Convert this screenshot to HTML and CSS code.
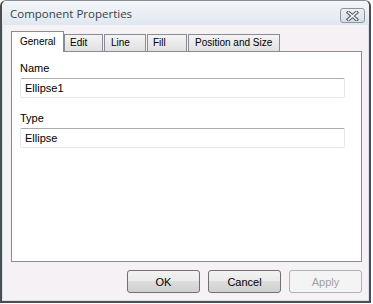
FILE: index.html
```html
<!DOCTYPE html>
<html lang="en">
<head>
  <meta charset="UTF-8">
  <title>Component Properties</title>
  <link rel="stylesheet" href="styles.css">
</head>
<body>

  <!-- Dialog window -->
  <div class="window">
    <div class="titlebar">
      <span class="title">Component Properties</span>
      <button class="close-btn" aria-label="Close">
        <svg width="15" height="10" viewBox="0 0 15 10">
          <path d="M3.5 1.5 L11.5 8.5 M11.5 1.5 L3.5 8.5" stroke="#4a5562" stroke-width="3.6" stroke-linecap="square" fill="none"/>
          <path d="M3.5 1.5 L11.5 8.5 M11.5 1.5 L3.5 8.5" stroke="#f4f6f8" stroke-width="1.6" stroke-linecap="square" fill="none"/>
        </svg>
      </button>
    </div>

    <div class="client">
      <!-- Tabs -->
      <div class="tabs">
        <div class="tab active">General</div>
        <div class="tab tab-edit">Edit</div>
        <div class="tab tab-line">Line</div>
        <div class="tab tab-fill">Fill</div>
        <div class="tab tab-pos">Position and Size</div>
      </div>

      <div class="panel">
        <label class="field-label">Name</label>
        <input class="field" type="text" value="Ellipse1">

        <label class="field-label">Type</label>
        <input class="field" type="text" value="Ellipse">
      </div>

      <!-- Buttons -->
      <div class="buttons">
        <button class="btn">OK</button>
        <button class="btn">Cancel</button>
        <button class="btn" disabled>Apply</button>
      </div>
    </div>
  </div>

</body>
</html>
```

FILE: styles.css
```css
body {
  margin: 0;
  background: #ffffff;
  font-family: "Liberation Sans", Arial, sans-serif;
}

/* Window frame */
.window {
  width: 367px;
  height: 300px;
  border: 2px solid #4d4d4d;
  border-top: 1px solid #8a8e94;
  border-radius: 6px 6px 0 0;
  background: #f5f1f5;
  display: flex;
  flex-direction: column;
}

.titlebar {
  height: 24px;
  display: flex;
  align-items: center;
  padding: 0 4px 0 8px;
  background: linear-gradient(#f4f7fa, #dfe7ef);
  border-radius: 5px 5px 0 0;
}

.title {
  font-family: "Open Sans", sans-serif;
  font-size: 11.5px;
  color: #3a3f46;
  margin-top: 1px;
}

.close-btn {
  margin-left: auto;
  width: 25px;
  height: 15px;
  padding: 0;
  border: 1px solid #8c96a3;
  border-radius: 3px;
  background: linear-gradient(#eef2f6, #d7dee6);
  display: flex;
  align-items: center;
  justify-content: center;
  margin-top: 5px;
}

.client {
  flex: 1;
  border: 1px solid #cfe2f3;
  border-top: none;
  padding: 6px 6px 0 8px;
  display: flex;
  flex-direction: column;
}

/* Tabs */
.tabs {
  display: flex;
  align-items: flex-end;
  height: 20px;
  position: relative;
  z-index: 1;
}

.tab {
  box-sizing: border-box;
  height: 17px;
  border: 1px solid #898c95;
  border-bottom: none;
  background: linear-gradient(#f4f4f4, #e0e0e0);
  font-size: 10px;
  line-height: 16px;
  padding: 0 0 0 5px;
  margin-right: 1px;
  color: #000;
  white-space: nowrap;
}

.tab.active {
  width: 53px;
  height: 21px;
  background: #ffffff;
  padding-left: 8px;
  line-height: 19px;
  margin-bottom: -1px;
  margin-right: 0;
}

.tab-edit { width: 39px; }
.tab-line { width: 42px; padding-left: 6px; }
.tab-fill { width: 40px; }
.tab-pos { width: 92px; padding-left: 6px; }

/* Panel */
.panel {
  box-sizing: border-box;
  height: 211px;
  background: #ffffff;
  border: 1px solid #898c95;
  padding: 9px 16px 0 8px;
  display: flex;
  flex-direction: column;
}

.field-label {
  font-size: 11px;
  height: 14px;
  line-height: 14px;
  margin-bottom: 3px;
}

.field {
  height: 20px;
  box-sizing: border-box;
  border: 1px solid #e3e9ef;
  border-top-color: #abadb3;
  border-radius: 2px;
  padding: 0 4px;
  font-family: "Liberation Sans", Arial, sans-serif;
  font-size: 11px;
  color: #000;
  margin-bottom: 13px;
  outline: none;
}

/* Dialog buttons */
.buttons {
  display: flex;
  justify-content: flex-end;
  gap: 8px;
  padding-top: 8px;
}

.btn {
  width: 73px;
  height: 23px;
  border: 1px solid #707070;
  border-radius: 3px;
  background: linear-gradient(#f2f2f2 0%, #ebebeb 45%, #dddddd 50%, #cfcfcf 100%);
  font-family: "Liberation Sans", Arial, sans-serif;
  font-size: 11px;
  color: #000;
  padding: 0;
}

.btn:disabled {
  border-color: #adb2b5;
  background: #f4f4f4;
  color: #a0a0a0;
}
```
